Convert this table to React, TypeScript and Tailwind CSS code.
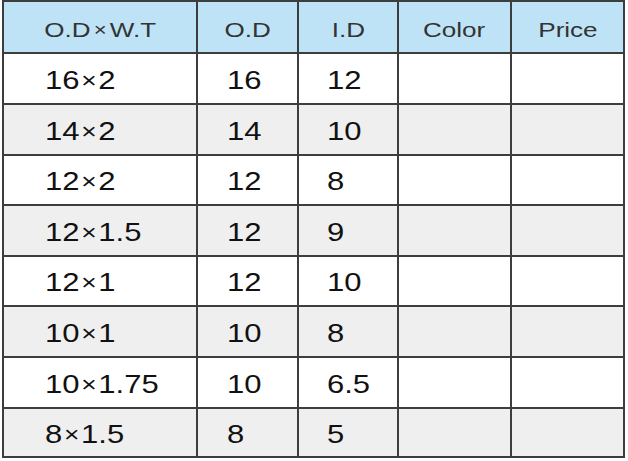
import React from "react";

const rows: { c: [string, string, string]; h: string; bg: string }[] = [
  { c: ["16×2", "16", "12"], h: "h-[49px]", bg: "bg-white" },
  { c: ["14×2", "14", "10"], h: "h-[49px]", bg: "bg-[#efefef]" },
  { c: ["12×2", "12", "8"], h: "h-[48px]", bg: "bg-white" },
  { c: ["12×1.5", "12", "9"], h: "h-[49px]", bg: "bg-[#efefef]" },
  { c: ["12×1", "12", "10"], h: "h-[48px]", bg: "bg-white" },
  { c: ["10×1", "10", "8"], h: "h-[49px]", bg: "bg-[#efefef]" },
  { c: ["10×1.75", "10", "6.5"], h: "h-[49px]", bg: "bg-white" },
  { c: ["8×1.5", "8", "5"], h: "h-[47px]", bg: "bg-[#efefef]" },
];

const headers = ["O.D×W.T", "O.D", "I.D", "Color", "Price"];

function Txt({ t, head }: { t: string; head?: boolean }) {
  const parts = t.split("×");
  if (parts.length === 1) return <>{t}</>;
  return (
    <>
      {parts[0]}
      <span
        className={
          head
            ? "mx-[2.6px] text-[0.85em] align-[0.04em]"
            : "mx-[1.4px] text-[0.85em] align-[0.04em]"
        }
      >
        ×
      </span>
      {parts[1]}
    </>
  );
}

export default function App() {
  return (
    <div
      className="w-[628px] h-[461px] bg-white"
      style={{ fontFamily: '"Liberation Sans", Arial, sans-serif' }}
    >
      <div className="ml-[2px] w-[623px] grid grid-cols-[192px_99px_98px_111px_111px] gap-[2px] p-[2px] bg-[#3d3d3d]">
        {headers.map((h) => (
          <div
            key={h}
            className="h-[50px] bg-[#bfe3f6] flex items-center justify-center pt-[5px] text-[21px] text-[#333333]"
          >
            <span className="inline-block scale-x-[1.24] origin-center whitespace-nowrap">
              <Txt t={h} head />
            </span>
          </div>
        ))}
        {rows.map((r, i) => (
          <React.Fragment key={i}>
            <div className={`${r.h} ${r.bg} flex items-center pl-[41px] pt-[4px] text-[25px] text-[#111111]`}>
              <span className="inline-block scale-x-[1.24] origin-left whitespace-nowrap">
                <Txt t={r.c[0]} />
              </span>
            </div>
            <div className={`${r.h} ${r.bg} flex items-center pl-[29px] pt-[4px] text-[25px] text-[#111111]`}>
              <span className="inline-block scale-x-[1.24] origin-left whitespace-nowrap">{r.c[1]}</span>
            </div>
            <div className={`${r.h} ${r.bg} flex items-center pl-[28px] pt-[4px] text-[25px] text-[#111111]`}>
              <span className="inline-block scale-x-[1.24] origin-left whitespace-nowrap">{r.c[2]}</span>
            </div>
            <div className={`${r.h} ${r.bg}`} />
            <div className={`${r.h} ${r.bg}`} />
          </React.Fragment>
        ))}
      </div>
    </div>
  );
}
